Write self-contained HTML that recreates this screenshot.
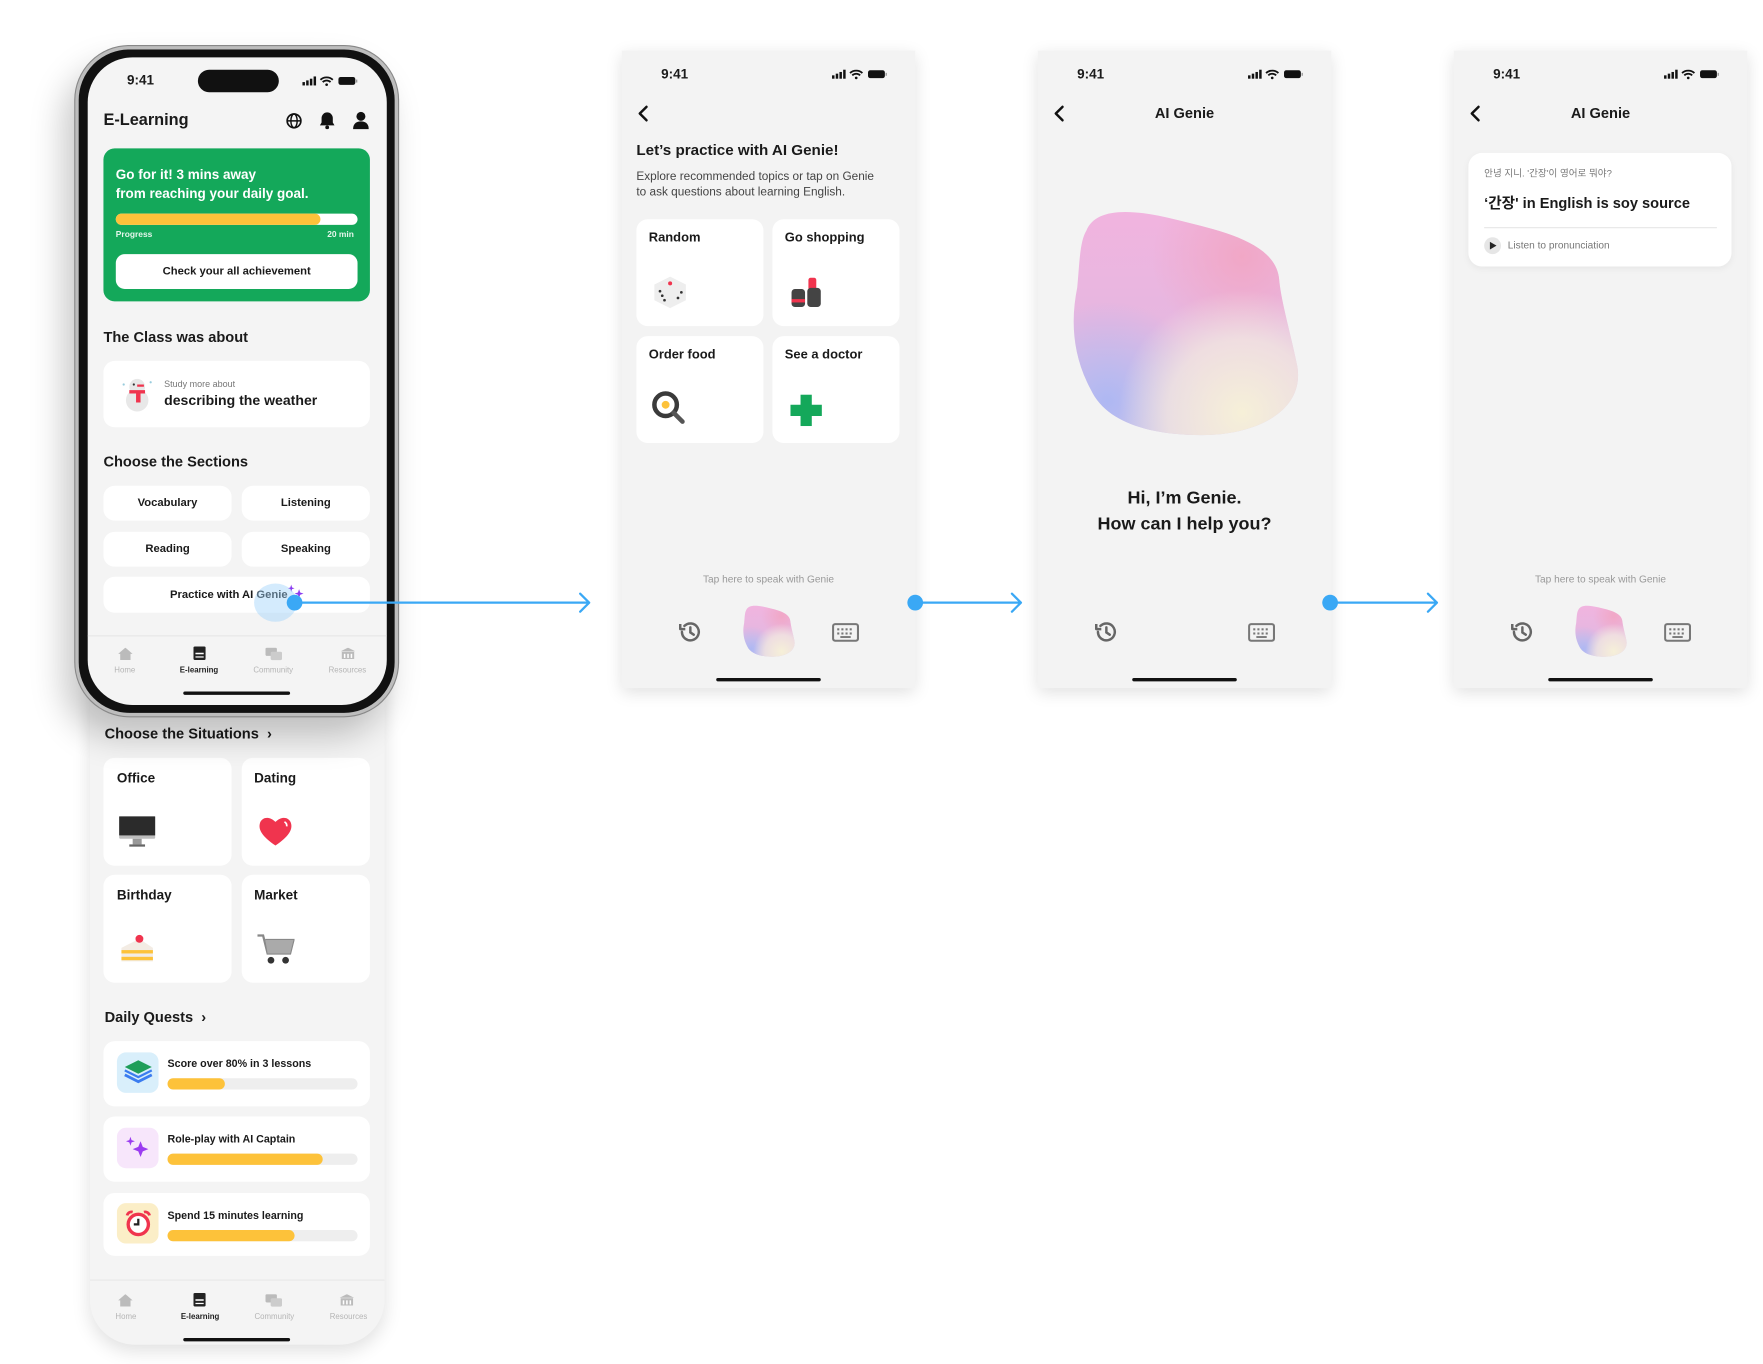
<!DOCTYPE html>
<html><head><meta charset="utf-8">
<style>
*{margin:0;padding:0;box-sizing:border-box}
html,body{width:1763px;height:1363px;background:#fff;overflow:hidden;font-family:"Liberation Sans","Noto Sans CJK KR",sans-serif;color:#1a1a1a}
#w{position:absolute;left:0;top:0;width:1568px;height:1213px;transform:scale(1.12436);transform-origin:0 0}
.a{position:absolute}
.t{position:absolute;white-space:nowrap;line-height:1}
.b{font-weight:bold}
.card{position:absolute;background:#fff;border-radius:10px}
.scr{position:absolute;background:#f3f3f3;box-shadow:0 4px 14px rgba(0,0,0,.13);overflow:hidden}
.btn{position:absolute;background:#fff;border-radius:10px;font-size:10px;font-weight:bold;display:flex;align-items:center;justify-content:center}
.bar{position:absolute;height:10px;border-radius:5px;background:#eeeeee}
.bar i{display:block;height:10px;border-radius:5px;background:#fdc23a}
.nav{position:absolute;font-size:7px;color:#b5b5b5;text-align:center;width:60px}
.nav.on{color:#222;font-weight:bold}
.ind{position:absolute;height:3px;border-radius:2px;background:#111}
</style></head><body>
<svg width="0" height="0" style="position:absolute">
<defs>
<linearGradient id="g0" x1="0" y1="0" x2="0" y2="1"><stop offset="0" stop-color="#f1b4df"/><stop offset=".5" stop-color="#e6b7e0"/><stop offset="1" stop-color="#d7c6e6"/></linearGradient>
<radialGradient id="g1" cx=".15" cy=".85" r=".45"><stop offset="0" stop-color="#aeb8f3"/><stop offset="1" stop-color="#aeb8f3" stop-opacity="0"/></radialGradient>
<radialGradient id="g2" cx=".75" cy=".9" r=".55"><stop offset="0" stop-color="#f6f0d8"/><stop offset=".6" stop-color="#f2e6e0" stop-opacity=".8"/><stop offset="1" stop-color="#f2e6e0" stop-opacity="0"/></radialGradient>
<radialGradient id="g3" cx=".75" cy=".2" r=".4"><stop offset="0" stop-color="#f1a7c6"/><stop offset="1" stop-color="#f1a7c6" stop-opacity="0"/></radialGradient>
<path id="blob" d="M6,10 C10,0 25,0 45,5 C65,10 90,15 91,32 C92,42 96,55 99,70 C102,90 80,100 57,100 C35,100 15,95 8,80 C0,65 -1,50 2,35 C3,25 3,15 6,10Z"/>
<symbol id="bl" viewBox="-2 -2 104 104"><use href="#blob" fill="url(#g0)"/><use href="#blob" fill="url(#g3)"/><use href="#blob" fill="url(#g1)"/><use href="#blob" fill="url(#g2)"/></symbol>
<symbol id="hist" viewBox="0 0 24 24"><path d="M4.5 12a7.5 7.5 0 1 0 2.2-5.3" fill="none" stroke="#666" stroke-width="2.2" stroke-linecap="round"/><path d="M3 5v4.5h4.5" fill="none" stroke="#666" stroke-width="2.2" stroke-linejoin="round"/><path d="M12 8v4.5l3 2" fill="none" stroke="#666" stroke-width="2.2" stroke-linecap="round"/></symbol>
<symbol id="kb" viewBox="0 0 26 18"><rect x="1" y="1" width="24" height="16" rx="2" fill="none" stroke="#777" stroke-width="2"/><g fill="#777"><rect x="5" y="5" width="2" height="2"/><rect x="9" y="5" width="2" height="2"/><rect x="13" y="5" width="2" height="2"/><rect x="17" y="5" width="2" height="2"/><rect x="5" y="9" width="2" height="2"/><rect x="9" y="9" width="2" height="2"/><rect x="13" y="9" width="2" height="2"/><rect x="17" y="9" width="2" height="2"/><rect x="8" y="12.5" width="10" height="1.8"/></g></symbol>
<symbol id="stat" viewBox="0 0 50 10"><g fill="#111"><rect x="0" y="6" width="2.2" height="3"/><rect x="3.3" y="4.5" width="2.2" height="4.5"/><rect x="6.6" y="3" width="2.2" height="6"/><rect x="9.9" y="1" width="2.2" height="8"/></g><path d="M16 4a8 8 0 0 1 11 0M18 6a5 5 0 0 1 7 0" stroke="#111" stroke-width="1.6" fill="none"/><circle cx="21.5" cy="8.3" r="1.2" fill="#111"/><rect x="32" y="1.5" width="15" height="7" rx="2" fill="#111"/><rect x="47.6" y="3.8" width="1.2" height="2.6" fill="#999"/></symbol>
<symbol id="chev" viewBox="0 0 10 16"><path d="M8 2L2 8l6 6" fill="none" stroke="#111" stroke-width="2.2" stroke-linecap="round" stroke-linejoin="round"/></symbol>
<symbol id="home" viewBox="0 0 14 12"><path d="M7 0L0 6h2v6h10V6h2z" fill="#bbb"/></symbol>
<symbol id="book" viewBox="0 0 12 13"><rect x="0" y="0" width="12" height="13" rx="1.5" fill="#222"/><rect x="2" y="6" width="8" height="1.5" fill="#fff"/><rect x="2" y="9.5" width="8" height="1.2" fill="#fff"/></symbol>
<symbol id="comm" viewBox="0 0 16 13"><rect x="0" y="0" width="11" height="8" rx="1.5" fill="#bbb"/><rect x="5" y="4" width="11" height="8" rx="1.5" fill="#ccc"/></symbol>
<symbol id="res" viewBox="0 0 14 12"><path d="M7 0L0 3.5h14z" fill="#bbb"/><rect x="1" y="4" width="12" height="7" fill="#bbb"/><g fill="#fff"><rect x="3" y="6" width="1.5" height="4"/><rect x="6.3" y="6" width="1.5" height="4"/><rect x="9.6" y="6" width="1.5" height="4"/></g></symbol>
</defs></svg>

<div id="w">

<!-- lower extension panel -->
<div class="a" style="left:80px;top:560px;width:262px;height:636px;background:#f4f4f4;border-radius:0 0 40px 40px;box-shadow:0 6px 16px rgba(0,0,0,.12)"></div>
<div class="t b" style="left:93px;top:646px;font-size:13px">Choose the Situations&nbsp; ›</div>
<div class="card" style="left:92px;top:674px;width:114px;height:96px"><div class="t b" style="left:12px;top:12px;font-size:12px">Office</div>
<svg class="a" style="left:13px;top:52px" width="34" height="30" viewBox="0 0 34 30"><rect x="1" y="0" width="32" height="20" rx="1" fill="#bdbdbd"/><rect x="1" y="0" width="32" height="17" fill="#2b2b2b"/><rect x="13" y="20" width="8" height="5" fill="#999"/><rect x="10" y="25" width="14" height="2" fill="#666"/></svg></div>
<div class="card" style="left:215px;top:674px;width:114px;height:96px"><div class="t b" style="left:11px;top:12px;font-size:12px">Dating</div>
<svg class="a" style="left:14px;top:50px" width="32" height="30" viewBox="0 0 32 30"><path d="M16 28C4 20 1 14 2 9 3 3 10 1 16 7 22 1 29 3 30 9 31 14 28 20 16 28z" fill="#f0344e"/><path d="M24 7a4 4 0 0 1 2 4" stroke="#fff" stroke-width="1.5" fill="none"/></svg></div>
<div class="card" style="left:92px;top:778px;width:114px;height:96px"><div class="t b" style="left:12px;top:12px;font-size:12px">Birthday</div>
<svg class="a" style="left:14px;top:52px" width="32" height="28" viewBox="0 0 32 28"><path d="M2 13L18 5 30 13v12H2z" fill="#f3ece4"/><rect x="2" y="15" width="28" height="3" fill="#fdc23a"/><rect x="2" y="21" width="28" height="3" fill="#fdc23a"/><circle cx="18" cy="5" r="3.5" fill="#f0344e"/></svg></div>
<div class="card" style="left:215px;top:778px;width:114px;height:96px"><div class="t b" style="left:11px;top:12px;font-size:12px">Market</div>
<svg class="a" style="left:13px;top:52px" width="34" height="30" viewBox="0 0 34 30"><path d="M1 2h5l4 16h20l3-12H8" fill="none" stroke="#888" stroke-width="2"/><path d="M8 6h25l-3 12H10z" fill="#aaa"/><circle cx="13" cy="24" r="3" fill="#333"/><circle cx="26" cy="24" r="3" fill="#333"/></svg></div>

<div class="t b" style="left:93px;top:898px;font-size:13px">Daily Quests&nbsp; ›</div>
<div class="card" style="left:92px;top:926px;width:237px;height:58px">
<div class="a" style="left:12px;top:10px;width:37px;height:36px;border-radius:8px;background:#d9effb"></div>
<svg class="a" style="left:17px;top:15px" width="28" height="26" viewBox="0 0 28 26"><path d="M2 15l12 6 12-6" stroke="#3b7df0" stroke-width="2.5" fill="none"/><path d="M2 11l12 6 12-6" stroke="#3b7df0" stroke-width="2" fill="none"/><path d="M2 8l12-6 12 6-12 6z" fill="#1f9e5a"/></svg>
<div class="t b" style="left:57px;top:16px;font-size:9.5px">Score over 80% in 3 lessons</div>
<div class="bar" style="left:57px;top:33px;width:169px"><i style="width:51px"></i></div></div>
<div class="card" style="left:92px;top:993px;width:237px;height:58px">
<div class="a" style="left:12px;top:10px;width:37px;height:36px;border-radius:8px;background:#f7e6fb"></div>
<svg class="a" style="left:18px;top:16px" width="26" height="24" viewBox="0 0 26 24"><path d="M15 6l2 5 5 2-5 2-2 5-2-5-5-2 5-2z" fill="#9b3cf0"/><path d="M6 2l1 3 3 1-3 1-1 3-1-3-3-1 3-1z" fill="#9b3cf0"/></svg>
<div class="t b" style="left:57px;top:16px;font-size:9.5px">Role-play with AI Captain</div>
<div class="bar" style="left:57px;top:33px;width:169px"><i style="width:138px"></i></div></div>
<div class="card" style="left:92px;top:1061px;width:237px;height:56px">
<div class="a" style="left:12px;top:9px;width:37px;height:36px;border-radius:8px;background:#fbeec7"></div>
<svg class="a" style="left:18px;top:14px" width="26" height="26" viewBox="0 0 26 26"><circle cx="13" cy="14" r="9" fill="#fff" stroke="#f0344e" stroke-width="3"/><path d="M13 9v5h-4" stroke="#222" stroke-width="2" fill="none"/><path d="M3 6a4 4 0 0 1 5-3M23 6a4 4 0 0 0-5-3" stroke="#f0344e" stroke-width="2.5" fill="none"/></svg>
<div class="t b" style="left:57px;top:16px;font-size:9.5px">Spend 15 minutes learning</div>
<div class="bar" style="left:57px;top:33px;width:169px"><i style="width:113px"></i></div></div>

<div class="a" style="left:80px;top:1138px;width:262px;height:1px;background:#e8e8e8"></div>
<svg class="a" style="left:105px;top:1151px" width="13" height="11"><use href="#home"/></svg>
<svg class="a" style="left:172px;top:1150px" width="11" height="12"><use href="#book"/></svg>
<svg class="a" style="left:236px;top:1151px" width="15" height="12"><use href="#comm"/></svg>
<svg class="a" style="left:302px;top:1151px" width="13" height="11"><use href="#res"/></svg>
<div class="nav" style="left:82px;top:1168px">Home</div>
<div class="nav on" style="left:148px;top:1168px">E-learning</div>
<div class="nav" style="left:214px;top:1168px">Community</div>
<div class="nav" style="left:280px;top:1168px">Resources</div>
<div class="ind" style="left:163px;top:1190px;width:95px"></div>

<!-- phone -->
<div class="a" style="left:67px;top:41px;width:287px;height:596px;border-radius:48px;background:#111;border:3px solid #bdbdbd;box-shadow:0 0 0 1px #888,-10px 18px 30px rgba(0,0,0,.22)"></div>
<div class="a" style="left:78px;top:51px;width:266px;height:576px;border-radius:40px;background:#f4f4f4;overflow:hidden">
 <div class="t b" style="left:35px;top:14px;font-size:12px">9:41</div>
 <div class="a" style="left:98px;top:11px;width:72px;height:20px;border-radius:10px;background:#111"></div>
 <svg class="a" style="left:190px;top:16px" width="52" height="10"><use href="#stat"/></svg>
 <div class="t b" style="left:14px;top:49px;font-size:14.5px">E-Learning</div>
 <svg class="a" style="left:176px;top:49px" width="15" height="15" viewBox="0 0 16 16"><circle cx="8" cy="8" r="6.5" fill="none" stroke="#111" stroke-width="1.6"/><ellipse cx="8" cy="8" rx="3" ry="6.5" fill="none" stroke="#111" stroke-width="1.4"/><path d="M1.5 8h13" stroke="#111" stroke-width="1.4"/></svg>
 <svg class="a" style="left:206px;top:48px" width="14" height="16" viewBox="0 0 14 16"><path d="M7 1a5 5 0 0 1 5 5v4l1.5 2.5H.5L2 10V6a5 5 0 0 1 5-5z" fill="#111"/><circle cx="7" cy="14.3" r="1.7" fill="#111"/></svg>
 <svg class="a" style="left:236px;top:48px" width="14" height="16" viewBox="0 0 14 16"><circle cx="7" cy="4.5" r="4" fill="#111"/><path d="M0 16c0-5 3-7 7-7s7 2 7 7z" fill="#111"/></svg>
 <div class="a" style="left:14px;top:81px;width:237px;height:136px;border-radius:10px;background:#14a85a"></div>
 <div class="t b" style="left:25px;top:96px;font-size:12px;color:#fff;line-height:17px">Go for it! 3 mins away<br>from reaching your daily goal.</div>
 <div class="a" style="left:25px;top:139px;width:215px;height:10px;border-radius:5px;background:#fff"><div style="width:182px;height:10px;border-radius:5px;background:#fdc23a"></div></div>
 <div class="t b" style="left:25px;top:154px;font-size:7.5px;color:#e6f6ec">Progress</div>
 <div class="t b" style="left:213px;top:154px;font-size:7.5px;color:#e6f6ec">20 min</div>
 <div class="btn" style="left:25px;top:175px;width:215px;height:31px;border-radius:8px">Check your all achievement</div>
 <div class="t b" style="left:14px;top:242px;font-size:13px">The Class was about</div>
 <div class="card" style="left:14px;top:270px;width:237px;height:59px"></div>
 <svg class="a" style="left:29px;top:283px" width="30" height="32" viewBox="0 0 30 32"><circle cx="15" cy="22" r="10" fill="#e8e8e8"/><circle cx="15" cy="10" r="7" fill="#e8e8e8"/><path d="M8 13h14v3h-4v8h-4v-8H8z" fill="#f0344e"/><path d="M15 9h6" stroke="#f0344e" stroke-width="2"/><circle cx="12" cy="8" r="1" fill="#333"/><circle cx="3" cy="8" r="1" fill="#9cd"/><circle cx="27" cy="6" r="1" fill="#9cd"/></svg>
 <div class="t" style="left:68px;top:287px;font-size:8px;color:#777">Study more about</div>
 <div class="t b" style="left:68px;top:299px;font-size:12.5px">describing the weather</div>
 <div class="t b" style="left:14px;top:353px;font-size:13px">Choose the Sections</div>
 <div class="btn" style="left:14px;top:381px;width:114px;height:31px">Vocabulary</div>
 <div class="btn" style="left:137px;top:381px;width:114px;height:31px">Listening</div>
 <div class="btn" style="left:14px;top:422px;width:114px;height:31px">Reading</div>
 <div class="btn" style="left:137px;top:422px;width:114px;height:31px">Speaking</div>
 <div class="btn" style="left:14px;top:462px;width:237px;height:32px;padding-right:14px">Practice with AI Genie</div>
 <svg class="a" style="left:176px;top:468px" width="18" height="14" viewBox="0 0 18 14"><path d="M5 1l.8 2.5L8 4.2 5.8 5 5 7.5 4.2 5 2 4.2 4.2 3.5z" fill="#8b3cf0"/><path d="M12 5l1 3 3 1-3 1-1 3-1-3-3-1 3-1z" fill="#8b3cf0"/></svg>
 <div class="a" style="left:148px;top:468px;width:38px;height:34px;border-radius:50%;background:rgba(160,210,250,.45)"></div>
 <div class="a" style="left:0;top:514px;width:266px;height:1px;background:#e6e6e6"></div>
 <svg class="a" style="left:27px;top:525px" width="13" height="11"><use href="#home"/></svg>
 <svg class="a" style="left:94px;top:524px" width="11" height="12"><use href="#book"/></svg>
 <svg class="a" style="left:158px;top:525px" width="15" height="12"><use href="#comm"/></svg>
 <svg class="a" style="left:225px;top:525px" width="13" height="11"><use href="#res"/></svg>
 <div class="nav" style="left:3px;top:542px">Home</div>
 <div class="nav on" style="left:69px;top:542px">E-learning</div>
 <div class="nav" style="left:135px;top:542px">Community</div>
 <div class="nav" style="left:201px;top:542px">Resources</div>
 <div class="ind" style="left:85px;top:564px;width:95px"></div>
</div>

<!-- screen 2 -->
<div class="scr" style="left:553px;top:45px;width:261px;height:567px">
 <div class="t b" style="left:35px;top:15px;font-size:12px">9:41</div>
 <svg class="a" style="left:186px;top:16px" width="52" height="10"><use href="#stat"/></svg>
 <svg class="a" style="left:14px;top:48px" width="10" height="16"><use href="#chev"/></svg>
 <div class="t b" style="left:13px;top:82px;font-size:13.5px">Let’s practice with AI Genie!</div>
 <div class="t" style="left:13px;top:105px;font-size:10.5px;color:#444;line-height:14px">Explore recommended topics or tap on Genie<br>to ask questions about learning English.</div>
 <div class="card" style="left:13px;top:150px;width:113px;height:95px"><div class="t b" style="left:11px;top:12px;font-size:11.5px">Random</div>
 <svg class="a" style="left:14px;top:50px" width="32" height="30" viewBox="0 0 32 30"><path d="M16 1l14 7v14l-14 7-14-7V8z" fill="#eee"/><circle cx="16" cy="7" r="1.8" fill="#f0344e"/><g fill="#333"><circle cx="7" cy="14" r="1.2"/><circle cx="9" cy="18" r="1.2"/><circle cx="11" cy="22" r="1.2"/><circle cx="23" cy="20" r="1.2"/><circle cx="26" cy="15" r="1.2"/></g></svg></div>
 <div class="card" style="left:134px;top:150px;width:113px;height:95px"><div class="t b" style="left:11px;top:12px;font-size:11.5px">Go shopping</div>
 <svg class="a" style="left:16px;top:50px" width="30" height="30" viewBox="0 0 30 30"><rect x="1" y="12" width="12" height="16" rx="3" fill="#444"/><rect x="1" y="21" width="12" height="3" fill="#f0344e"/><rect x="16" y="2" width="7" height="11" rx="2" fill="#f0344e"/><rect x="15" y="11" width="12" height="17" rx="3" fill="#444"/></svg></div>
 <div class="card" style="left:13px;top:254px;width:113px;height:95px"><div class="t b" style="left:11px;top:12px;font-size:11.5px">Order food</div>
 <svg class="a" style="left:13px;top:48px" width="32" height="32" viewBox="0 0 32 32"><circle cx="13" cy="13" r="10" fill="#fff" stroke="#3a3a3a" stroke-width="4"/><circle cx="13" cy="13" r="3.5" fill="#fdc23a"/><path d="M20 20l8 8" stroke="#555" stroke-width="4" stroke-linecap="round"/></svg></div>
 <div class="card" style="left:134px;top:254px;width:113px;height:95px"><div class="t b" style="left:11px;top:12px;font-size:11.5px">See a doctor</div>
 <svg class="a" style="left:16px;top:52px" width="28" height="28" viewBox="0 0 28 28"><path d="M9 0h10v9h9v10h-9v9H9v-9H0V9h9z" fill="#14a85a"/></svg></div>
 <div class="t" style="left:0;width:261px;text-align:center;top:466px;font-size:9px;color:#999">Tap here to speak with Genie</div>
 <svg class="a" style="left:49px;top:505px" width="24" height="24"><use href="#hist"/></svg>
 <svg class="a" style="left:105px;top:492px" width="52" height="48"><use href="#bl"/></svg>
 <svg class="a" style="left:187px;top:509px" width="24" height="17"><use href="#kb"/></svg>
 <div class="ind" style="left:84px;top:558px;width:93px"></div>
</div>

<!-- screen 3 -->
<div class="scr" style="left:923px;top:45px;width:261px;height:567px">
 <div class="t b" style="left:35px;top:15px;font-size:12px">9:41</div>
 <svg class="a" style="left:186px;top:16px" width="52" height="10"><use href="#stat"/></svg>
 <svg class="a" style="left:14px;top:48px" width="10" height="16"><use href="#chev"/></svg>
 <div class="t b" style="left:0;width:261px;text-align:center;top:49px;font-size:13px">AI Genie</div>
 <svg class="a" style="left:24px;top:136px" width="216" height="210"><use href="#bl"/></svg>
 <div class="t b" style="left:0;width:261px;text-align:center;top:387px;font-size:16px;line-height:23px">Hi, I’m Genie.<br>How can I help you?</div>
 <svg class="a" style="left:49px;top:505px" width="24" height="24"><use href="#hist"/></svg>
 <svg class="a" style="left:187px;top:509px" width="24" height="17"><use href="#kb"/></svg>
 <div class="ind" style="left:84px;top:558px;width:93px"></div>
</div>

<!-- screen 4 -->
<div class="scr" style="left:1293px;top:45px;width:261px;height:567px">
 <div class="t b" style="left:35px;top:15px;font-size:12px">9:41</div>
 <svg class="a" style="left:186px;top:16px" width="52" height="10"><use href="#stat"/></svg>
 <svg class="a" style="left:14px;top:48px" width="10" height="16"><use href="#chev"/></svg>
 <div class="t b" style="left:0;width:261px;text-align:center;top:49px;font-size:13px">AI Genie</div>
 <div class="card" style="left:13px;top:91px;width:234px;height:101px;border-radius:12px;box-shadow:0 2px 6px rgba(0,0,0,.05)">
  <div class="t" style="left:14px;top:14px;font-size:8.5px;color:#777">안녕 지니. '간장'이 영어로 뭐야?</div>
  <div class="t b" style="left:14px;top:38px;font-size:13px">‘간장' in English is soy source</div>
  <div class="a" style="left:14px;top:66px;width:207px;height:1px;background:#e6e6e6"></div>
  <div class="a" style="left:14px;top:75px;width:15px;height:15px;border-radius:50%;background:#e6e6e6"></div>
  <svg class="a" style="left:19px;top:79px" width="6" height="7"><path d="M0 0l6 3.5L0 7z" fill="#222"/></svg>
  <div class="t" style="left:35px;top:78px;font-size:9px;color:#777">Listen to pronunciation</div>
 </div>
 <div class="t" style="left:0;width:261px;text-align:center;top:466px;font-size:9px;color:#999">Tap here to speak with Genie</div>
 <svg class="a" style="left:49px;top:505px" width="24" height="24"><use href="#hist"/></svg>
 <svg class="a" style="left:105px;top:492px" width="52" height="48"><use href="#bl"/></svg>
 <svg class="a" style="left:187px;top:509px" width="24" height="17"><use href="#kb"/></svg>
 <div class="ind" style="left:84px;top:558px;width:93px"></div>
</div>

<!-- arrows (on top) -->
<svg class="a" style="left:0;top:0" width="1568" height="1213">
<g stroke="#3aa8f5" stroke-width="2" fill="none" stroke-linecap="round" stroke-linejoin="round">
<path d="M262 536H524M516 528l8 8-8 8"/>
<path d="M814 536H908M900 528l8 8-8 8"/>
<path d="M1183 536H1278M1270 528l8 8-8 8"/>
</g>
<g fill="#3aa8f5"><circle cx="262" cy="536" r="7"/><circle cx="814" cy="536" r="7"/><circle cx="1183" cy="536" r="7"/></g>
</svg>

</div>
</body></html>
